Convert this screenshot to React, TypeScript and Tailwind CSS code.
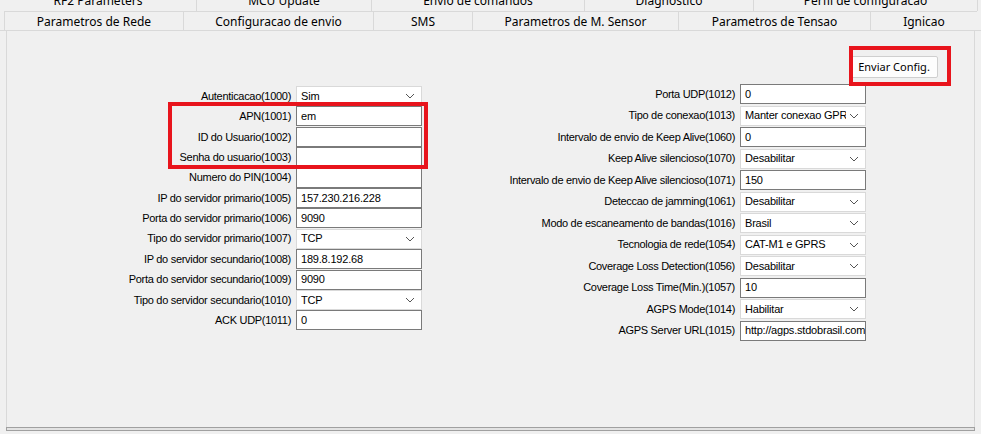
const top = [
  ["RF2 Parameters", 197],
  ["MCU Update", 175],
  ["Envio de comandos", 213],
  ["Diagnostico", 169],
  ["Perfil de configuracao", 224],
] as const;
const second = [
  ["Parametros de Rede", 179],
  ["Configuracao de envio", 190],
  ["SMS", 99],
  ["Parametros de M. Sensor", 206],
  ["Parametros de Tensao", 192],
  ["Ignicao", 107],
] as const;

type Row = { label: string; value: string; select?: boolean };

const left: Row[] = [
  { label: "Autenticacao(1000)", value: "Sim", select: true },
  { label: "APN(1001)", value: "em" },
  { label: "ID do Usuario(1002)", value: "" },
  { label: "Senha do usuario(1003)", value: "" },
  { label: "Numero do PIN(1004)", value: "" },
  { label: "IP do servidor primario(1005)", value: "157.230.216.228" },
  { label: "Porta do servidor primario(1006)", value: "9090" },
  { label: "Tipo do servidor primario(1007)", value: "TCP", select: true },
  { label: "IP do servidor secundario(1008)", value: "189.8.192.68" },
  { label: "Porta do servidor secundario(1009)", value: "9090" },
  { label: "Tipo do servidor secundario(1010)", value: "TCP", select: true },
  { label: "ACK UDP(1011)", value: "0" },
];

const right: Row[] = [
  { label: "Porta UDP(1012)", value: "0" },
  { label: "Tipo de conexao(1013)", value: "Manter conexao GPR", select: true },
  { label: "Intervalo de envio de Keep Alive(1060)", value: "0" },
  { label: "Keep Alive silencioso(1070)", value: "Desabilitar", select: true },
  { label: "Intervalo de envio de Keep Alive silencioso(1071)", value: "150" },
  { label: "Deteccao de jamming(1061)", value: "Desabilitar", select: true },
  { label: "Modo de escaneamento de bandas(1016)", value: "Brasil", select: true },
  { label: "Tecnologia de rede(1054)", value: "CAT-M1 e GPRS", select: true },
  { label: "Coverage Loss Detection(1056)", value: "Desabilitar", select: true },
  { label: "Coverage Loss Time(Min.)(1057)", value: "10" },
  { label: "AGPS Mode(1014)", value: "Habilitar", select: true },
  { label: "AGPS Server URL(1015)", value: "http://agps.stdobrasil.com" },
];

const sans = { fontFamily: '"Liberation Sans", Arial, sans-serif' };

function Field({ r }: { r: Row }) {
  return (
    <div className="flex items-center h-[20px]">
      <span className="flex-1 text-right pr-[5px] text-[11px] tracking-[-0.3px] text-black whitespace-nowrap">{r.label}</span>
      {r.select ? (
        <div className="w-[126px] h-[20px] bg-white border border-[#d9d9d9] flex items-center pl-[4px] pr-[6px] text-[11px] tracking-[-0.2px] overflow-hidden">
          <span className="flex-1 whitespace-nowrap overflow-hidden">{r.value}</span>
          <svg width="10" height="6" viewBox="0 0 10 6" className="shrink-0 ml-[3px]"><path d="M1 1l4 4 4-4" stroke="#555" fill="none" /></svg>
        </div>
      ) : (
        <div className="w-[126px] h-[20px] bg-white border border-[#7a7a7a] flex items-center pl-[4px] text-[11px] tracking-[-0.2px] overflow-hidden whitespace-nowrap">
          {r.value}
        </div>
      )}
    </div>
  );
}

export default function App() {
  return (
    <div className="w-[981px] h-[434px] bg-[#f0f0f0] relative overflow-hidden" style={sans}>
      <div className="flex h-[11px] overflow-hidden" style={{ fontFamily: '"Noto Sans", sans-serif' }}>
        {top.map(([t, w]) => (
          <div key={t} style={{ width: w }} className="h-[20px] -mt-[9px] border-r border-[#d9d9d9] text-[12px] text-center leading-[20px]">{t}</div>
        ))}
      </div>
      <div className="flex h-[20px] pl-[4px] border-b border-[#d9d9d9]" style={{ fontFamily: '"Noto Sans", sans-serif' }}>
        {second.map(([t, w]) => (
          <div key={t} style={{ width: w }} className="text-[12px] text-center leading-[19px] border-l border-t border-[#d9d9d9]">{t}</div>
        ))}
      </div>
      <div className="mx-[6px] h-[396px] border-l border-r border-[#d9d9d9] relative">
        <div className="flex justify-end pr-[36px] pt-[25px] h-[55px]">
          <button className="w-[88px] h-[22px] bg-[#fdfdfd] border border-[#cfcfcf] rounded-[2px] text-[11px]" style={{ fontFamily: '"Noto Sans", sans-serif' }}>Enviar Config.</button>
        </div>
        <div className="flex">
          <div className="w-[415px] flex flex-col gap-[0.4px]">
            {left.map((r) => <Field key={r.label} r={r} />)}
          </div>
          <div className="w-[444px] flex flex-col gap-[1.5px] mt-[-2px]">
            {right.map((r) => <Field key={r.label} r={r} />)}
          </div>
        </div>
        <div className="absolute left-[161px] top-[71px] w-[260px] h-[67px] border-[4px] border-[#e8141c]" />
        <div className="absolute left-[842px] top-[15px] w-[102px] h-[40px] border-[4px] border-[#e8141c]" />
      </div>
      <div className="mx-[6px] h-[4px] border border-[#a0a0a0] bg-[#e3e3e3]" />
    </div>
  );
}
